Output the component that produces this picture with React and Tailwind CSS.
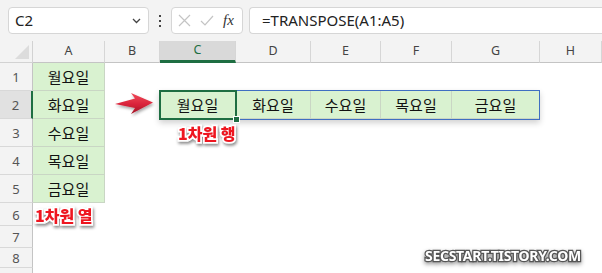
import React from 'react';

const COLS = ['A', 'B', 'C', 'D', 'E', 'F', 'G', 'H'];
const ROWS = [1, 2, 3, 4, 5, 6, 7, 8, 9];
const DAYS = ['월요일', '화요일', '수요일', '목요일', '금요일'];

const ui = { fontFamily: '"Noto Sans", "Open Sans", sans-serif' };
const kr = { fontFamily: '"Noto Sans CJK KR", "Noto Sans", sans-serif' };

// which cells hold a value
const cellText = (r, c) => {
  if (c === 'A' && r <= 5) return DAYS[r - 1];
  if (r === 2 && 'CDEFG'.includes(c)) return DAYS['CDEFG'.indexOf(c)];
  return null;
};

const Toolbar = () => (
  <div className="flex h-[41px] items-center gap-0 bg-[#f3f3f3] pl-2" style={ui}>
    {/* name box */}
    <div className="flex h-[27px] w-[141px] items-center justify-between rounded-[4px] border border-[#d6d6d6] bg-white pl-[6px] pr-[7px]">
      <span className="text-[15px] text-[#222]">C2</span>
      <svg width="9" height="6" viewBox="0 0 9 6" fill="none" stroke="#444" strokeWidth="1.3">
        <path d="M1 1l3.5 3.5L8 1" />
      </svg>
    </div>
    <div className="flex w-[22px] flex-col items-center gap-[3px]">
      <span className="h-[2px] w-[2px] bg-[#444]" />
      <span className="h-[2px] w-[2px] bg-[#444]" />
      <span className="h-[2px] w-[2px] bg-[#444]" />
    </div>
    {/* cancel / enter / fx */}
    <div className="flex h-[27px] w-[72px] items-center gap-[9px] rounded-[4px] border border-[#d6d6d6] bg-white pl-[6px]">
      <svg width="13" height="13" viewBox="0 0 13 13" stroke="#c4c4c4" strokeWidth="1.2">
        <path d="M1 1l11 11M12 1L1 12" />
      </svg>
      <svg width="14" height="11" viewBox="0 0 14 11" fill="none" stroke="#c4c4c4" strokeWidth="1.2">
        <path d="M1 6l4 4 8-9" />
      </svg>
      <span className="text-[15px] italic text-[#333]" style={{ fontFamily: '"Liberation Serif", serif' }}>fx</span>
    </div>
    <div className="ml-[6px] flex h-[27px] flex-1 items-center rounded-l-[4px] border border-r-0 border-[#d6d6d6] bg-white pl-3">
      <span className="text-[15px] text-[#222]">=TRANSPOSE(A1:A5)</span>
    </div>
  </div>
);

const Label = ({ children, className }) => (
  <span
    className={`absolute whitespace-nowrap text-[16px] font-black text-[#ee1620] [paint-order:stroke_fill] [-webkit-text-stroke:3.5px_white] [filter:drop-shadow(1px_2px_1.5px_rgba(0,0,0,0.45))] ${className}`}
    style={kr}
  >
    {children}
  </span>
);

export default function App() {
  return (
    <div className="relative h-[273px] w-[602px] overflow-hidden bg-white">
      <Toolbar />

      <div
        className="grid grid-cols-[33px_72px_55px_76px_75px_70px_71px_88px_62px] grid-rows-[22px_28px_28px_28px_28px_28px_23px_22px_20px_20px]"
        style={ui}
      >
        {/* header row */}
        <div className="relative border-b border-r border-[#d2d2d2] bg-[#f3f3f3]">
          <div className="absolute bottom-[3px] right-[3px] h-0 w-0 border-b-[14px] border-l-[14px] border-b-[#dcdcdc] border-l-transparent" />
        </div>
        {COLS.map((c) => (
          <div
            key={c}
            className={`flex items-center justify-center border-r border-[#d6d6d6] text-[12.5px] ${
              c === 'C'
                ? 'border-b-[3px] border-b-[#1e6e42] bg-[#d9d9d9] text-[#1e6e42]'
                : 'border-b border-b-[#c4c4c4] bg-[#f3f3f3] text-[#444]'
            }`}
          >
            {c}
          </div>
        ))}

        {ROWS.map((r) => (
          <React.Fragment key={r}>
            <div
              className={`flex items-center justify-center border-b border-[#d8d8d8] pt-[3px] text-[13px] text-[#555] ${
                r === 2 ? 'border-r-2 border-r-[#1e6e42] bg-[#e1e1e1]' : 'border-r border-r-[#c4c4c4] bg-[#f3f3f3]'
              }`}
            >
              {r < 9 ? r : ''}
            </div>
            {COLS.map((c) => {
              const t = cellText(r, c);
              return t ? (
                <div
                  key={c}
                  className="flex items-center justify-center border-b border-r border-[#c9d6c4] bg-[#d9f2d0] pt-[1px] text-[15px] text-[#111]"
                  style={kr}
                >
                  {t}
                </div>
              ) : (
                <div key={c} />
              );
            })}
          </React.Fragment>
        ))}
      </div>

      {/* range C2:G2 and active cell */}
      <div className="pointer-events-none absolute left-[159px] top-[90px] h-[30px] w-[381px] border-[1.5px] border-[#3f6fc2] shadow-[0_3px_6px_rgba(0,0,0,0.18)]" />
      <div className="pointer-events-none absolute left-[159px] top-[90px] h-[30px] w-[78px] border-2 border-[#1e6e42]" />
      <div className="absolute left-[233px] top-[116px] h-[7px] w-[7px] border border-white bg-[#1e6e42]" />

      {/* arrow */}
      <svg className="absolute left-[113px] top-[90px]" width="44" height="28" viewBox="0 0 44 28">
        <defs>
          <linearGradient id="ar" x1="0" y1="0" x2="0" y2="1">
            <stop offset="0" stopColor="#f04a5a" />
            <stop offset="0.55" stopColor="#d9233a" />
            <stop offset="1" stopColor="#9e1424" />
          </linearGradient>
          <filter id="sh" x="-20%" y="-20%" width="150%" height="160%">
            <feDropShadow dx="1" dy="2" stdDeviation="1.4" floodColor="#000" floodOpacity="0.35" />
          </filter>
        </defs>
        <path d="M2 14 L22 8.5 L18 3 L40 12.5 L18 24 L22 18 Z" fill="url(#ar)" filter="url(#sh)" />
      </svg>

      <Label className="left-[178px] top-[121px]">1차원 행</Label>
      <Label className="left-[35px] top-[203px]">1차원 열</Label>

      {/* watermark */}
      <span
        className="absolute left-[425px] top-[245px] text-[14px] font-bold tracking-[-0.3px] text-white [paint-order:stroke_fill] [-webkit-text-stroke:2.5px_#555] [filter:drop-shadow(0_2px_2px_rgba(0,0,0,0.4))]"
        style={{ fontFamily: '"Noto Sans", sans-serif' }}
      >
        SECSTART.TISTORY.COM
      </span>
    </div>
  );
}
